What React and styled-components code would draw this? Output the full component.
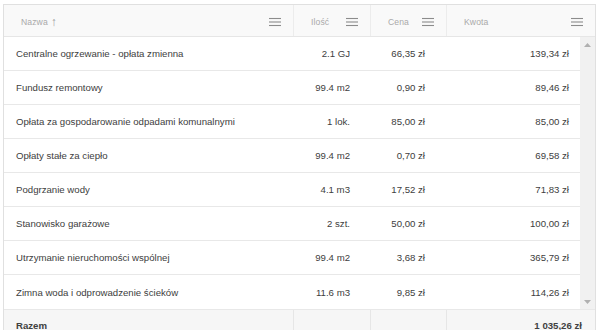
import React from "react";
import styled, { createGlobalStyle } from "styled-components";

const Global = createGlobalStyle`
  html, body { margin: 0; padding: 0; background: #ffffff; }
  body { font-family: "Liberation Sans", Arial, sans-serif; }
`;

const COLS = "290px 77px 76px 1fr";

const Wrapper = styled.div`
  margin: 4px 0 0 3px;
  width: 593px;
  height: 340px;
  box-sizing: border-box;
  border: 1px solid #e0e0e0;
  border-bottom: none;
  background: #ffffff;
  display: flex;
  flex-direction: column;
  overflow: hidden;
`;

const HeaderRow = styled.div`
  display: grid;
  grid-template-columns: ${COLS};
  height: 32px;
  box-sizing: border-box;
  background: #f9f9f9;
  border-bottom: 1px solid #e6e6e6;
`;

const HeaderCell = styled.div`
  display: flex;
  align-items: center;
  justify-content: space-between;
  padding: 2px 12px 0 17px;
  box-sizing: border-box;
  border-right: ${(p) => (p.$last ? "none" : "1px solid #ececec")};
  font-size: 8.6px;
  color: #a9a9a9;
  letter-spacing: 0.1px;
`;

const Label = styled.span`
  display: inline-flex;
  align-items: center;
  gap: 3px;
`;

const SortArrow = styled.span`
  font-size: 12px;
  line-height: 1;
  color: #9a9a9a;
`;

const BodyArea = styled.div`
  height: 272px;
  display: flex;
  background: #ffffff;
`;

const RowsColumn = styled.div`
  flex: 1;
  min-width: 0;
  display: flex;
  flex-direction: column;
`;

const ScrollTrack = styled.div`
  width: 15px;
  flex: none;
  background: #f1f1f1;
  display: flex;
  flex-direction: column;
  justify-content: space-between;
`;

const ScrollButton = styled.div`
  height: 15px;
  display: flex;
  align-items: center;
  justify-content: center;
`;

const Row = styled.div`
  display: grid;
  grid-template-columns: ${COLS};
  height: 34px;
  box-sizing: border-box;
  border-bottom: 1px solid #e8e8e8;
  &:last-child { border-bottom: none; }
`;

const Cell = styled.div`
  display: flex;
  align-items: center;
  justify-content: ${(p) => (p.$right ? "flex-end" : "flex-start")};
  padding-left: 12px;
  padding-right: ${(p) => p.$pr || 12}px;
  box-sizing: border-box;
  font-size: 9.65px;
  color: #404040;
  white-space: nowrap;
  font-weight: ${(p) => (p.$bold ? 700 : 400)};
`;

const FooterRow = styled.div`
  display: grid;
  grid-template-columns: ${COLS};
  height: 34px;
  box-sizing: border-box;
  background: #f6f6f6;
  border-top: 1px solid #e8e8e8;
`;

const FooterCell = styled(Cell)`
  border-right: ${(p) => (p.$last ? "none" : "1px solid #e6e6e6")};
  align-items: flex-start;
  padding-top: 10px;
`;

const MenuIcon = () => (
  <svg width="12" height="10" viewBox="0 0 12 10" style={{ display: "block" }}>
    <g stroke="#8c8c8c" strokeWidth="1.1">
      <line x1="0" y1="1.5" x2="12" y2="1.5" />
      <line x1="0" y1="5" x2="12" y2="5" />
      <line x1="0" y1="8.5" x2="12" y2="8.5" />
    </g>
  </svg>
);

const Tri = ({ down }) => (
  <svg width="7" height="4" viewBox="0 0 7 4" style={{ display: "block" }}>
    <polygon
      points={down ? "0,0 7,0 3.5,4" : "0,4 7,4 3.5,0"}
      fill="#b0b0b0"
    />
  </svg>
);

const rows = [
  ["Centralne ogrzewanie - opłata zmienna", "2.1 GJ", "66,35 zł", "139,34 zł"],
  ["Fundusz remontowy", "99.4 m2", "0,90 zł", "89,46 zł"],
  ["Opłata za gospodarowanie odpadami komunalnymi", "1 lok.", "85,00 zł", "85,00 zł"],
  ["Opłaty stałe za ciepło", "99.4 m2", "0,70 zł", "69,58 zł"],
  ["Podgrzanie wody", "4.1 m3", "17,52 zł", "71,83 zł"],
  ["Stanowisko garażowe", "2 szt.", "50,00 zł", "100,00 zł"],
  ["Utrzymanie nieruchomości wspólnej", "99.4 m2", "3,68 zł", "365,79 zł"],
  ["Zimna woda i odprowadzenie ścieków", "11.6 m3", "9,85 zł", "114,26 zł"],
];

export default function App() {
  return (
    <>
      <Global />
      <Wrapper>
        <HeaderRow>
          <HeaderCell>
            <Label>
              Nazwa <SortArrow>↑</SortArrow>
            </Label>
            <MenuIcon />
          </HeaderCell>
          <HeaderCell>
            <Label>Ilość</Label>
            <MenuIcon />
          </HeaderCell>
          <HeaderCell>
            <Label>Cena</Label>
            <MenuIcon />
          </HeaderCell>
          <HeaderCell $last>
            <Label>Kwota</Label>
            <MenuIcon />
          </HeaderCell>
        </HeaderRow>
        <BodyArea>
          <RowsColumn>
            {rows.map((r) => (
              <Row key={r[0]}>
                <Cell>{r[0]}</Cell>
                <Cell $right $pr={21}>{r[1]}</Cell>
                <Cell $right $pr={22}>{r[2]}</Cell>
                <Cell $right $pr={11}>{r[3]}</Cell>
              </Row>
            ))}
          </RowsColumn>
          <ScrollTrack>
            <ScrollButton>
              <Tri />
            </ScrollButton>
            <ScrollButton>
              <Tri down />
            </ScrollButton>
          </ScrollTrack>
        </BodyArea>
        <FooterRow>
          <FooterCell $bold>Razem</FooterCell>
          <FooterCell />
          <FooterCell />
          <FooterCell $last $right $bold $pr={13}>1 035,26 zł</FooterCell>
        </FooterRow>
      </Wrapper>
    </>
  );
}
